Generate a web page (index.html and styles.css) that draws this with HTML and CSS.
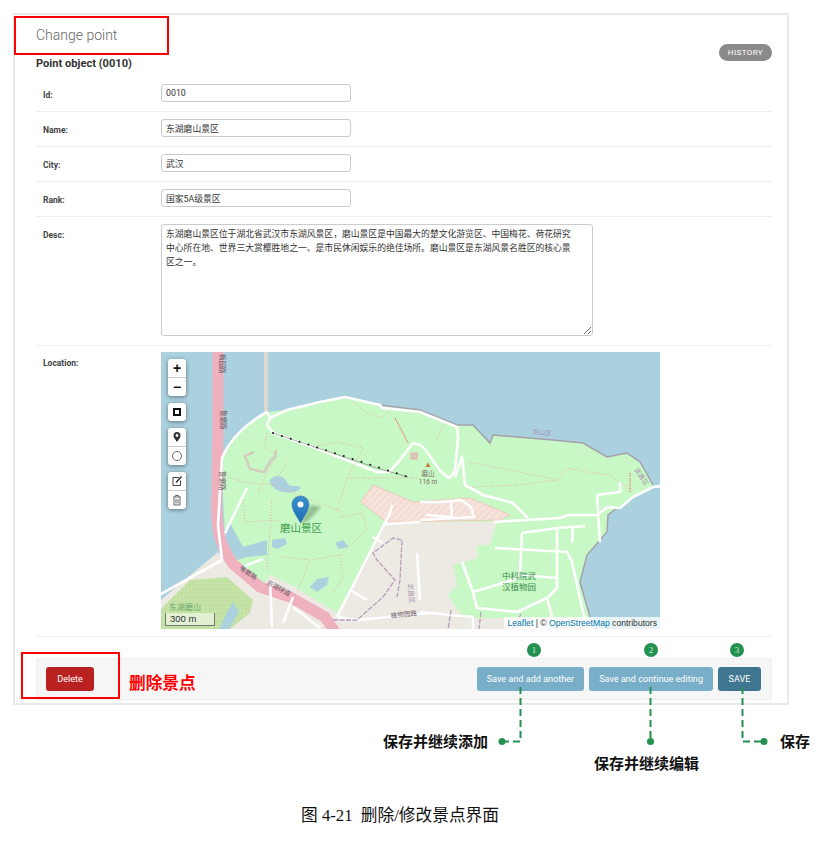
FILE: index.html
```html
<!DOCTYPE html>
<html lang="zh-CN">
<head>
	<meta charset="utf-8">
	<title>Change point</title>
	<link rel="stylesheet" href="styles.css">
</head>
<body>
<div class="panel">
	<div class="head">
		<h1>Change point</h1>
		<a class="history" href="#">HISTORY</a>
	</div>
	<h2>Point object (0010)</h2>
	<form>
		<div class="row"><label>Id:</label><input type="text" value="0010"></div>
		<div class="row"><label>Name:</label><input type="text" value="东湖磨山景区"></div>
		<div class="row"><label>City:</label><input type="text" value="武汉"></div>
		<div class="row"><label>Rank:</label><input type="text" value="国家5A级景区"></div>
		<div class="row"><label>Desc:</label><textarea>东湖磨山景区位于湖北省武汉市东湖风景区，磨山景区是中国最大的楚文化游览区、中国梅花、荷花研究中心所在地、世界三大赏樱胜地之一、是市民休闲娱乐的绝佳场所。磨山景区是东湖风景名胜区的核心景区之一。</textarea></div>
		<div class="row row-map">
			<label>Location:</label>
			<div class="map">
				<svg class="map-art" viewBox="0 0 499 277" width="499" height="277">
					<defs>
						<pattern id="hatch" width="5" height="5" patternUnits="userSpaceOnUse" patternTransform="rotate(45)">
							<rect width="5" height="5" fill="#f6e3dc"/>
							<rect width="1.500" height="5" fill="#f2d8d0"/>
						</pattern>
						<pattern id="trees" width="4" height="4" patternUnits="userSpaceOnUse">
							<rect width="4" height="4" fill="#c5e3a6"/>
							<circle cx="1" cy="1" r=".6" fill="#a9cf8c"/>
						</pattern>
						<linearGradient id="pin" x1="0" y1="0" x2="0" y2="1">
							<stop offset="0" stop-color="#3a8fcb"/>
							<stop offset="1" stop-color="#1f6fb8"/>
						</linearGradient>
					</defs>
					<rect width="499" height="277" fill="#abd1df"/>
					<!-- land -->
					<path class="land" d="M0 258L29 228 66 222 60 106 C70 85 88 70 106 60 L126 58 159 50 184 45 219 53 259 58 296 73 312 73 329 91 332 83 392 88 422 91 446 105 466 101 479 110 492 133 472 145 456 156 447 163 446 180 426 203 419 230 429 265 432 277 0 277Z"/>
					<path class="urban" d="M0 248L57 200 66 212 99 235 129 245 172 277 0 277Z"/>
					<path d="M-1 258L29 228 66 225 92 248 89 261 69 277 0 277Z" fill="url(#trees)"/>
					<path class="urban" d="M100 236L109 223 132 234 176 261 229 161 231 170 336 170 329 193 316 193 316 206 292 213 296 233 287 243 302 266 429 266 432 277 120 277Z"/>
					<path d="M212 133L252 150 309 146 349 163 339 168 225 170 200 150Z" fill="url(#hatch)" stroke="#f2bfb4" stroke-width=".8"/>
					<!-- ponds -->
					<path class="pond" d="M69 171L82 195 106 188 106 203 86 205 66 211 64 185Z"/>
					<path class="pond" d="M111 188L124 186 126 192 116 197 111 195Z"/>
					<path class="pond" d="M174 191L182 188 188 195 178 197Z"/>
					<path class="pond" d="M149 235L156 227 168 225 166 233 156 240Z"/>
					<path class="pond" d="M109 128C114 121 124 124 127 132 131 136 137 132 140 136 134 143 124 140 118 139 112 136 108 132 109 128Z"/>
					<path class="pond" d="M65 262L72 250 78 260 68 277 58 277Z"/>
					<!-- coast edge -->
					<path class="coast" d="M184 45L219 53 259 58 296 73 312 73 329 91 332 83 392 88 422 91 446 105 466 101 479 110 492 133"/>
					<path class="coast" d="M456 156L447 163 446 180 426 203 419 230 429 265"/>
					<!-- trunk road -->
					<path class="road-pink" d="M57 0L57 70 56 140 C54 180 60 195 72 212 L99 235 129 245 164 265 174 280"/>
					<path class="bridge" d="M105 0L105 60"/>
					<!-- white roads -->
					<path class="road" d="M106 60C88 70 70 85 61 106 L57 173 61 208 -11 248"/>
					<path class="road" d="M106 60L109 66 126 58 159 50 184 45 219 53 221 56 259 60 296 75 297 86 294 118 289 126C275 120 270 100 259 93L252 91 239 108 228 120 216 120 152 95 112 81 106 73 109 66"/>
					<path class="road" d="M294 125L301 105 304 133 322 143 352 151 367 166"/>
					<path class="road" d="M332 170L399 166 407 163 436 163 447 155 459 156 472 145 492 135 500 134"/>
					<path class="road" d="M361 181L396 176 424 174M361 181L359 223 352 228 312 240 301 210M334 196L406 200 411 210 422 260 428 277"/>
					<path class="road" d="M396 176L396 236 386 246 356 260 316 256 312 240M386 246L394 276M359 223L396 226M412 175L411 191"/>
					<path class="road" d="M436 143L459 140 459 130M436 143L439 190"/>
					<path class="road" d="M176 265L229 161 231 153M64 181L86 136M102 207L86 213 79 218"/>
					<path class="road" d="M176 265L196 268 269 261 312 265 312 277M259 260L312 265"/>
					<path class="road" d="M109 228L111 275M122 271L132 245M132 255L159 276M256 201L259 248M212 185L222 191M189 238L206 248M259 170L225 172M259 150L280 150 300 148 310 155 313 165 259 168M290 150L291 165 265 163"/>
					<!-- dotted paths -->
					<path class="track" d="M61 123L82 130 112 133 156 150 182 160M106 81L104 96 116 103 106 120 97 140M126 110L112 133M152 95L176 90 202 96 186 126 176 160M186 126L256 126"/>
					<path class="track" d="M82 148L84 170 119 168M111 148L106 218M179 165L202 161 206 178 179 203 149 208 136 241M179 203L182 225 172 241M122 205L149 208"/>
					<path class="track" d="M307 110L349 118 396 128 406 116 432 121 449 123 467 136M311 135L359 133 396 128M282 73L276 88M192 50L206 61 221 66 231 56"/>
					<path class="pier" d="M234 66L247 91"/>
					<path class="pier" d="M469 140L469 121"/>
					<path class="purple" d="M172 268L196 268 222 245 234 228 216 208 212 201 232 186 241 188 239 228 236 245"/>
					<path class="purple" d="M290 258L287 277M320 260L318 277M360 262L352 277"/>
					<path class="ruin" d="M93 100L84 104 89 117 103 120 110 108 114 105 115 98"/>
					<rect class="ruin-box" x="250" y="101" width="6" height="6"/>
					<path d="M264.500 115L267 110.500 269.500 115Z" fill="#c77a35"/>
					<!-- line drawn on the map -->
					<path class="wire" d="M112 81L216 116 247 125"/>
					<path class="wire-dots" d="M112 81L247 125"/>
					<!-- labels -->
					<text class="lbl lbl-park" x="119" y="180">磨山景区</text>
					<text class="lbl lbl-garden" x="341" y="227">中科院武</text>
					<text class="lbl lbl-garden" x="341" y="238">汉植物园</text>
					<text class="lbl lbl-peak" x="267" y="124">磨山</text>
					<text class="lbl lbl-peak" x="267" y="132">116 m</text>
					<text class="lbl lbl-dist" x="371" y="82" transform="rotate(5 371 82)">洪山区</text>
					<text class="lbl lbl-dist" x="473" y="118" transform="rotate(55 473 118)">武昌区</text>
					<text class="lbl lbl-dist" x="247" y="232" transform="rotate(85 247 232)">武昌区</text>
					<text class="lbl lbl-road" x="78" y="217" transform="rotate(35 78 217)">鲁磨路</text>
					<text class="lbl lbl-road" x="105" y="232" transform="rotate(28 105 232)">东湖绿道</text>
					<text class="lbl lbl-road" x="230" y="266" transform="rotate(-6 230 266)">植物园路</text>
					<text class="lbl lbl-road" x="59" y="2" transform="rotate(90 59 2)">梅园路</text>
					<text class="lbl lbl-road" x="60" y="58" transform="rotate(90 60 58)">鲁磨路</text>
					<text class="lbl lbl-road" x="59" y="119" transform="rotate(90 59 119)">鲁磨路</text>
					<text class="lbl lbl-wood" x="8" y="258">东湖磨山</text>
					<!-- marker -->
					<path class="pin-shadow" d="M139 171L150 153 160 155 146 170Z"/>
					<path d="M139.500 171C135 163 131 158 131 152.500 131 147.500 135 144 139.500 144 144 144 148 147.500 148 152.500 148 158 144 163 139.500 171Z" fill="url(#pin)" stroke="#2a6ea8" stroke-width=".5"/>
					<circle cx="139.500" cy="152.500" r="3" fill="#fff"/>
				</svg>
				<div class="controls">
					<div class="ctl-group">
						<span class="ctl ctl-glyph">+</span>
						<span class="ctl ctl-glyph">−</span>
					</div>
					<div class="ctl-group">
						<span class="ctl">
							<svg width="10" height="10" viewBox="0 0 10 10"><rect x="2" y="2" width="6" height="6" fill="none" stroke="#111" stroke-width="2"/></svg>
						</span>
					</div>
					<div class="ctl-group">
						<span class="ctl">
							<svg width="10" height="12" viewBox="0 0 10 12"><path d="M5 11C3 8 1.500 6.500 1.500 4.500A3.500 3.500 0 0 1 8.500 4.500C8.500 6.500 7 8 5 11Z" fill="#333"/><circle cx="5" cy="4.500" r="1.400" fill="#fff"/></svg>
						</span>
						<span class="ctl">
							<svg width="12" height="12" viewBox="0 0 12 12"><circle cx="6" cy="6" r="4.500" fill="none" stroke="#444" stroke-width=".8"/></svg>
						</span>
					</div>
					<div class="ctl-group">
						<span class="ctl">
							<svg width="12" height="12" viewBox="0 0 12 12"><path d="M8 2.500H2V10.500H9.500V5.500" fill="none" stroke="#444"/><path d="M5 7.500L10.500 1.500" stroke="#222" stroke-width="1.200"/></svg>
						</span>
						<span class="ctl">
							<svg width="12" height="12" viewBox="0 0 12 12"><path d="M2 3H10M4.500 3V1.500H7.500V3M3 3.500V11H9V3.500M5 5V9.500M7 5V9.500" fill="none" stroke="#666"/></svg>
						</span>
					</div>
				</div>
				<div class="scale">300 m</div>
				<div class="attribution"><a href="#">Leaflet</a> | © <a href="#">OpenStreetMap</a> contributors</div>
			</div>
		</div>
		<div class="submit-row">
			<button class="btn btn-delete" type="button">Delete</button>
			<span class="delete-note">删除景点</span>
			<div class="save-group">
				<button class="btn" type="button">Save and add another</button>
				<button class="btn" type="button">Save and continue editing</button>
				<button class="btn btn-save" type="button">SAVE</button>
			</div>
		</div>
	</form>
</div>

<p class="caption">图 4-21&nbsp;&nbsp;删除/修改景点界面</p>

<!-- annotations drawn over the screenshot -->
<div class="mark mark-title"></div>
<div class="mark mark-delete"></div>
<span class="badge badge-1">1</span>
<span class="badge badge-2">2</span>
<span class="badge badge-3">3</span>
<svg class="leaders" width="823" height="852" viewBox="0 0 823 852">
	<path d="M520.500 687V741.500H502M650.500 687V741.500M742.500 687V741.500H764"/>
	<circle cx="502" cy="741.500" r="3.500"/>
	<circle cx="650.500" cy="741.500" r="3.500"/>
	<circle cx="764" cy="741.500" r="3.500"/>
</svg>
<span class="note note-1">保存并继续添加</span>
<span class="note note-2">保存并继续编辑</span>
<span class="note note-3">保存</span>
</body>
</html>
```

FILE: styles.css
```css
body{
	margin: 0;
	background: #fff;
	font-family: Roboto, "Noto Sans CJK SC", sans-serif;
	color: #333;
}
.panel{
	box-sizing: border-box;
	width: 776px;
	height: 692px;
	margin: 13px 0 0 13px;
	padding: 0 15px 0 21px;
	border: 2px solid #e9e9e9;
}
.head{
	display: flex;
	justify-content: space-between;
	align-items: flex-end;
	height: 42px;
}
h1{
	margin: 0 0 13px;
	font-size: 14px;
	line-height: 18px;
	font-weight: 300;
	color: #666;
}
.history{
	margin-bottom: -4px;
	padding: 0 9px;
	height: 17px;
	border-radius: 9px;
	background: #8a8a8a;
	color: #fff;
	font-size: 8px;
	line-height: 17px;
	letter-spacing: .4px;
	text-decoration: none;
}
h2{
	margin: 0;
	height: 20px;
	font-size: 11.100px;
	line-height: 14px;
	font-weight: 700;
	color: #333;
}
.row{
	display: flex;
	padding: 7px 0 9px;
	border-bottom: 1px solid #eee;
}
.row-map{
	padding: 6px 0 7px;
}
.row label{
	width: 125px;
	padding: 6px 0 0 7px;
	box-sizing: border-box;
	font-size: 8.500px;
	font-weight: 700;
	line-height: 10px;
	color: #444;
}
.row input, .row textarea{
	box-sizing: border-box;
	margin: 0;
	padding: 0 4px;
	border: 1px solid #ccc;
	border-radius: 3px;
	background: #fff;
	color: #333;
	font: 8.800px/14px Roboto, "Noto Sans CJK SC", sans-serif;
}
.row input{
	width: 190px;
	height: 18px;
}
.row textarea{
	width: 432px;
	height: 112px;
	padding: 2px 14px 2px 4px;
	overflow: hidden;
}
.map{
	position: relative;
	width: 499px;
	height: 277px;
	overflow: hidden;
}
.map-art{
	display: block;
}
.land{ fill: #c8f8c6; }
.urban{ fill: #ede9e3; }
.pond{ fill: #abd1df; }
.coast{
	fill: none;
	stroke: #a5a0ac;
	stroke-width: 1.500;
}
.road-pink{
	fill: none;
	stroke: #eeb1bd;
	stroke-width: 11;
}
.bridge{
	fill: none;
	stroke: #dcd8d4;
	stroke-width: 4;
}
.road{
	fill: none;
	stroke: #fff;
	stroke-width: 2.600;
	stroke-linejoin: round;
}
.track{
	fill: none;
	stroke: #f4a8a4;
	stroke-width: 1;
	stroke-dasharray: 1 2;
}
.pier{
	fill: none;
	stroke: #f0806f;
	stroke-width: 1.300;
	stroke-dasharray: 1.500 1;
}
.purple{
	fill: none;
	stroke: #b79dbc;
	stroke-width: 1.300;
	stroke-dasharray: 5 1.500;
}
.ruin{
	fill: none;
	stroke: #d3cdbd;
	stroke-width: 2.500;
}
.ruin-box{
	fill: #d8c8bb;
	stroke: #f0aaa0;
}
.wire{
	fill: none;
	stroke: #777;
	stroke-width: .6;
}
.wire-dots{
	fill: none;
	stroke: #111;
	stroke-width: 2;
	stroke-linecap: round;
	stroke-dasharray: 0 9.300;
}
.pin-shadow{
	fill: #1d3a1d;
	opacity: .3;
	filter: blur(1.500px);
}
.lbl{
	font-family: "Noto Sans CJK SC", sans-serif;
}
.lbl-park{
	font-size: 10.500px;
	fill: #3c9a4b;
}
.lbl-garden{
	font-size: 8.500px;
	fill: #3c8f4b;
}
.lbl-peak{
	font-family: Roboto, "Noto Sans CJK SC", sans-serif;
	font-size: 6.500px;
	fill: #7a6a58;
	text-anchor: middle;
}
.lbl-dist{
	font-size: 6.500px;
	fill: #a58fb0;
}
.lbl-road{
	font-size: 6.500px;
	fill: #6a5560;
}
.lbl-wood{
	font-size: 8px;
	fill: #6da66d;
}
.controls{
	position: absolute;
	top: 7px;
	left: 7px;
	display: flex;
	flex-direction: column;
	gap: 7px;
}
.ctl-group{
	width: 18px;
	border-radius: 3px;
	background: #fff;
	box-shadow: 0 1px 4px rgba(0,0,0,.45);
}
.ctl{
	display: flex;
	justify-content: center;
	align-items: center;
	height: 18px;
}
.ctl + .ctl{
	border-top: 1px solid #ccc;
}
.ctl-glyph{
	font: 700 14px/18px "Liberation Sans", sans-serif;
	color: #111;
}
.scale{
	position: absolute;
	left: 4px;
	bottom: 3px;
	box-sizing: border-box;
	width: 50px;
	height: 13px;
	padding-left: 4px;
	border: 1px solid #777;
	border-top: 0;
	background: rgba(255,255,255,.5);
	color: #333;
	font: 9.500px/12px "Liberation Sans", sans-serif;
}
.attribution{
	position: absolute;
	right: 0;
	bottom: 0;
	padding: 0 3px;
	height: 12px;
	background: rgba(255,255,255,.75);
	color: #333;
	font: 8.600px/12px "Liberation Sans", sans-serif;
}
.attribution a{
	color: #0078a8;
	text-decoration: none;
}
.submit-row{
	display: flex;
	align-items: center;
	box-sizing: border-box;
	height: 42px;
	margin-top: 21px;
	padding: 0 10px 0 9px;
	border: 1px solid #eee;
	border-radius: 2px;
	background: #f6f6f6;
}
.btn{
	height: 24px;
	margin: 0;
	padding: 0 10px;
	border: 0;
	border-radius: 3px;
	background: #79aec8;
	color: #fff;
	font: 9.100px/24px Roboto, sans-serif;
}
.btn-delete{
	width: 48px;
	padding: 0;
	background: #ba2121;
}
.btn-save{
	width: 43px;
	padding: 0;
	background: #417690;
}
.delete-note{
	margin: 5px 0 0 35px;
	color: #f00;
	font: 700 16.700px/20px "Noto Sans CJK SC", sans-serif;
}
.save-group{
	display: flex;
	gap: 5px;
	margin-left: auto;
}
.caption{
	width: 800px;
	margin: 101px 0 0;
	color: #111;
	text-align: center;
	font: 16.700px/20px "Liberation Serif", "Noto Sans CJK SC", serif;
}
.mark{
	position: absolute;
	box-sizing: border-box;
	border: 2px solid #f00;
}
.mark-title{
	left: 14px;
	top: 16px;
	width: 155px;
	height: 39px;
}
.mark-delete{
	left: 21px;
	top: 652px;
	width: 99px;
	height: 47px;
}
.badge{
	position: absolute;
	top: 643px;
	width: 14px;
	height: 14px;
	border-radius: 50%;
	background: #239150;
	color: #cfe8d6;
	text-align: center;
	font: 9px/14px "Liberation Serif", serif;
}
.badge-1{ left: 527px; }
.badge-2{ left: 644px; }
.badge-3{ left: 730px; }
.leaders{
	position: absolute;
	top: 0;
	left: 0;
	pointer-events: none;
}
.leaders path{
	fill: none;
	stroke: #239150;
	stroke-width: 2;
	stroke-dasharray: 7 4;
}
.leaders circle{
	fill: #239150;
}
.note{
	position: absolute;
	color: #111;
	font: 700 15px/20px "Noto Sans CJK SC", sans-serif;
}
.note-1{
	left: 383px;
	top: 731px;
}
.note-2{
	left: 594px;
	top: 753px;
}
.note-3{
	left: 780px;
	top: 731px;
}
```
